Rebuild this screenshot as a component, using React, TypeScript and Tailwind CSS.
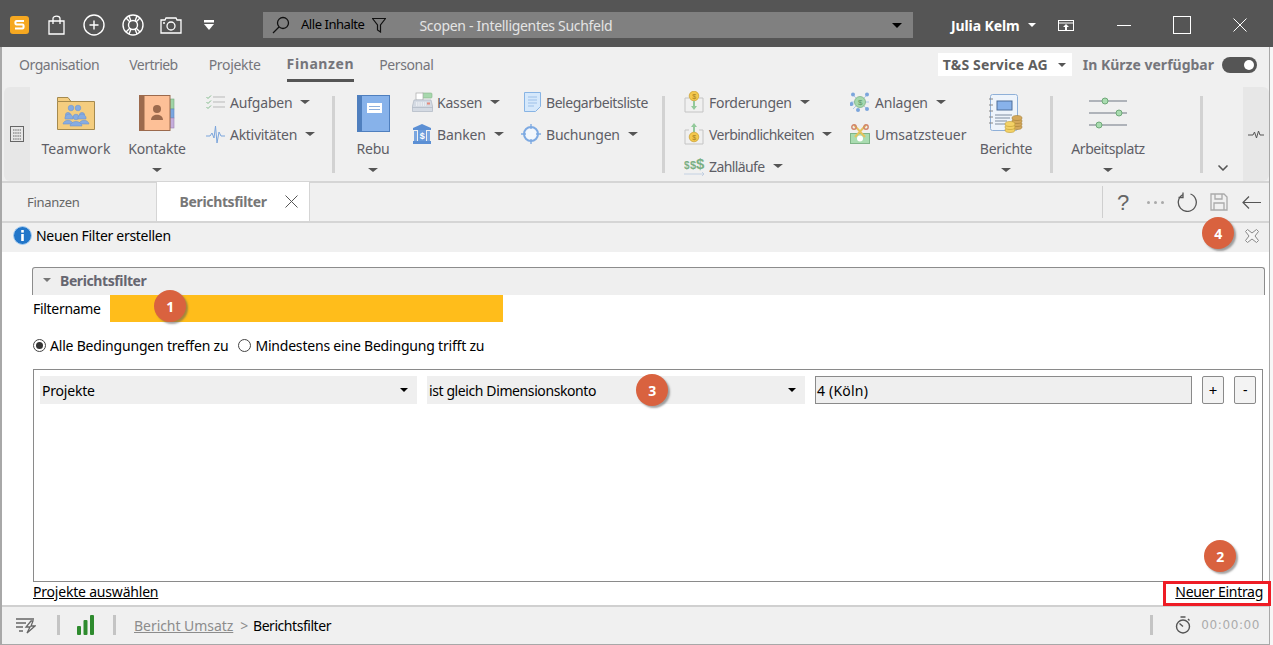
import React from "react";
import { ChevronDown } from "lucide-react";

const Caret = ({ c = "border-t-[#555]", className = "" }: { c?: string; className?: string }) => (
  <span className={`inline-block w-0 h-0 border-l-[4px] border-r-[4px] border-t-[4px] border-l-transparent border-r-transparent ${c} ${className}`} />
);
const WideCaret = ({ className = "" }: { className?: string }) => (
  <span className={`inline-block w-0 h-0 border-l-[5px] border-r-[5px] border-t-[4px] border-l-transparent border-r-transparent border-t-[#555] ${className}`} />
);

const Small = ({ icon, label, caret, iw, tr = "tracking-[-0.2px]" }: { icon: React.ReactNode; label: string; caret?: boolean; iw: string; tr?: string }) => (
  <div className="flex items-center h-[32px] whitespace-nowrap text-[14px] text-[#5e5e66]">
    <span className={`flex items-center justify-start shrink-0 ${iw}`}>{icon}</span>
    <span className={tr}>{label}</span>
    {caret && <WideCaret className="ml-[8px]" />}
  </div>
);

const Large = ({ icon, label, caret, w, tr = "tracking-[-0.2px]" }: { icon: React.ReactNode; label: string; caret?: boolean; w: string; tr?: string }) => (
  <div className={`flex flex-col items-center shrink-0 h-full ${w}`}>
    <div className="h-[52px] flex items-center justify-center shrink-0">{icon}</div>
    <div className={`text-[14px] leading-[19px] text-[#5e5e66] whitespace-nowrap ${tr}`}>{label}</div>
    {caret && <WideCaret className="mt-[10px]" />}
  </div>
);

const Sep = ({ m = "" }: { m?: string }) => <div className={`w-[3px] bg-[#d2d2d2] self-start mt-[9px] h-[77px] shrink-0 ${m}`} />;

const Badge = ({ n, className }: { n: string; className: string }) => (
  <div className={`absolute w-[32px] h-[32px] rounded-full bg-[#d9623f] text-white font-bold text-[14px] flex items-center justify-center shadow-[2px_2px_2px_rgba(90,90,90,0.55)] ${className}`}>{n}</div>
);

const TeamIcon = () => (
  <svg width="38" height="33" viewBox="0 0 38 33">
    <path d="M0.5 4.5V0.5H11L14 4.5H37.5V32.5H0.5Z" fill="#f4cd7f" stroke="#a58a4e" />
    <path d="M0.5 4.5H14" stroke="#a58a4e" />
    <g fill="#86ace2" stroke="#6f96cf" strokeWidth="0.6">
      <circle cx="14" cy="11" r="2.8" /><circle cx="21" cy="11" r="2.8" /><circle cx="11" cy="18" r="2.6" /><circle cx="25" cy="18" r="2.6" /><circle cx="19" cy="20" r="2.8" />
      <path d="M8 20c2-4 6-4 8 0v2H8zM21 20c2-4 6-4 8 0v2h-8z" />
      <path d="M6 27c1-5 9-5 10 0zM22 27c1-5 9-5 10 0z" />
      <path d="M13 29c1-6 11-6 12 0z" />
    </g>
  </svg>
);
const ContactIcon = () => (
  <svg width="36" height="37" viewBox="0 0 36 37">
    <rect x="31" y="4" width="4" height="10" fill="#9fd3a6" stroke="#76a87d" strokeWidth="0.6" />
    <rect x="31" y="14" width="4" height="9" fill="#79a6e0" stroke="#5b88c2" strokeWidth="0.6" />
    <rect x="31" y="23" width="4" height="10" fill="#c5addc" stroke="#9a84b3" strokeWidth="0.6" />
    <rect x="0" y="0" width="5" height="36" fill="#9c6a4d" />
    <rect x="5" y="0.5" width="26" height="35" fill="#fdc097" stroke="#9c6a4d" />
    <circle cx="18" cy="14" r="4" fill="#9c6a4d" />
    <path d="M12 25c0-7 12-7 12 0z" fill="#9c6a4d" />
  </svg>
);
const TaskIcon = () => (
  <svg width="19" height="14" viewBox="0 0 19 14" fill="none">
    <path d="M7 2H19M7 7H19M7 12H19" stroke="#b9b9b9" />
    <path d="M0.5 2L2 3.5L5 0.5M0.5 7L2 8.5L5 5.5M0.5 12L2 13.5L5 10.5" stroke="#83bb8c" />
  </svg>
);
const PulseIcon = () => (
  <svg width="19" height="19" viewBox="0 0 19 19" fill="none">
    <path d="M0 11H4L6 8L8 13L9.5 1L11 18L13 7L15 11H19" stroke="#7ba5dc" />
  </svg>
);
const RebuIcon = () => (
  <svg width="33" height="37" viewBox="0 0 33 37">
    <rect x="0.5" y="0.5" width="32" height="36" fill="#87b2ea" stroke="#4f7fbe" />
    <rect x="0" y="0" width="5" height="37" fill="#4f7fbe" />
    <rect x="10" y="8" width="15" height="10" fill="#fff" />
    <path d="M12 11.5H23M12 14.5H23" stroke="#8eb0de" />
  </svg>
);
const KasseIcon = () => (
  <svg width="21" height="21" viewBox="0 0 21 21">
    <rect x="10" y="1" width="10" height="5" rx="1" fill="#a7d8ad" stroke="#86b58c" strokeWidth="0.6" />
    <rect x="4" y="1" width="7" height="7" fill="#fff" stroke="#a9a9a9" strokeWidth="0.7" />
    <path d="M2 8H19L20.5 14V19.5H0.5V14Z" fill="#d4dae3" stroke="#aeb6c2" strokeWidth="0.7" />
    <path d="M4 11H14M4 13H14" stroke="#fff" strokeDasharray="1.3 1" />
    <rect x="15" y="10.5" width="3" height="2" fill="#e68a7c" />
    <path d="M0.5 15.5H20.5" stroke="#aeb6c2" strokeWidth="0.7" />
  </svg>
);
const BankIcon = () => (
  <svg className="ml-[1px]" width="18" height="20" viewBox="0 0 18 20">
    <path d="M9 0L18 4V6H0V4Z" fill="#5b8fd4" />
    <rect x="1" y="7" width="3" height="10" fill="#7aa6e0" /><rect x="14" y="7" width="3" height="10" fill="#7aa6e0" />
    <rect x="5" y="6" width="8" height="11" fill="#6a9bdb" />
    <text x="9" y="15.3" textAnchor="middle" fontSize="9" fontWeight="700" fill="#fff" fontFamily="Liberation Sans">$</text>
    <rect x="0" y="17" width="18" height="3" fill="#5b8fd4" />
  </svg>
);
const DocIcon = () => (
  <svg className="ml-[1px]" width="17" height="20" viewBox="0 0 17 20" fill="none">
    <path d="M0.5 0.5H16.5V14.5L11.5 19.5H0.5Z" fill="#d5e8fb" stroke="#88b4e4" />
    <path d="M4 5H13M4 8H13M4 11H13M4 14H10" stroke="#9dc0e8" />
  </svg>
);
const BuchIcon = () => (
  <svg className="-ml-[2px]" width="20" height="20" viewBox="0 0 20 20" fill="none">
    <circle cx="10" cy="10" r="7" stroke="#7eaae2" strokeWidth="2" fill="#f3f7fc" />
    <path d="M10 0V5M10 15V20M0 10H5M15 10H20" stroke="#7eaae2" strokeWidth="1.4" />
  </svg>
);
const CoinArrow = ({ up }: { up?: boolean }) => (
  <svg width="20" height="22" viewBox="0 0 20 22" fill="none">
    <path d="M1 7H5M15 7H19M1 7V21H19V7" stroke="#c4c4c4" />
    {up ? (
      <>
        <path d="M10 0L13 4H11V9H9V4H7Z" fill="#93c99b" />
        <circle cx="10" cy="14" r="4.8" fill="#f3c84d" stroke="#c79c2f" strokeWidth="0.7" />
        <text x="10" y="16.5" textAnchor="middle" fontSize="7" fill="#a87f1f" fontFamily="Liberation Sans">$</text>
      </>
    ) : (
      <>
        <circle cx="10" cy="5" r="4.8" fill="#f3c84d" stroke="#c79c2f" strokeWidth="0.7" />
        <text x="10" y="7.5" textAnchor="middle" fontSize="7" fill="#a87f1f" fontFamily="Liberation Sans">$</text>
        <path d="M9 10H11V15H13L10 19L7 15H9Z" fill="#93c99b" />
      </>
    )}
  </svg>
);
const ZahlIcon = () => (
  <svg width="21" height="20" viewBox="0 0 21 20" fill="none">
    <text x="0" y="13" fontSize="10" fontWeight="700" fill="#7aaf83" fontFamily="Liberation Sans">$</text>
    <text x="6" y="13" fontSize="11" fontWeight="700" fill="#7aaf83" fontFamily="Liberation Sans">$</text>
    <text x="12" y="13" fontSize="15" fontWeight="700" fill="#7aaf83" fontFamily="Liberation Sans">$</text>
    <path d="M0 18H20M18 16L20 18L18 20" stroke="#b9c9de" strokeWidth="0.8" />
  </svg>
);
const AnlagenIcon = () => (
  <svg width="20" height="20" viewBox="0 0 20 20" fill="none">
    <path d="M3 3L17 17M17 3L3 17M1 10H19" stroke="#9dbce5" strokeWidth="0.8" />
    <circle cx="10" cy="10" r="5.5" fill="#a6d8ad" stroke="#75ab7d" strokeWidth="0.7" />
    <text x="10" y="13" textAnchor="middle" fontSize="8" fill="#5f9868" fontFamily="Liberation Sans">$</text>
    <circle cx="3" cy="2.5" r="2" fill="#7ba5dc" /><circle cx="17" cy="2.5" r="2" fill="#7ba5dc" /><circle cx="1.5" cy="12" r="2" fill="#7ba5dc" /><circle cx="8" cy="18" r="2" fill="#7ba5dc" /><circle cx="17" cy="17" r="2" fill="#7ba5dc" />
  </svg>
);
const UStIcon = () => (
  <svg width="20" height="20" viewBox="0 0 20 20" fill="none">
    <rect x="0.5" y="9.5" width="19" height="10" fill="#a9dcb0" stroke="#7fb487" />
    <circle cx="10" cy="14.5" r="3" fill="#fff" />
    <path d="M4 1L15 13M16 1L5 13" stroke="#e6c35c" strokeWidth="2" />
    <circle cx="4" cy="3" r="2.2" stroke="#d0846a" strokeWidth="1.4" /><circle cx="16" cy="3" r="2.2" stroke="#d0846a" strokeWidth="1.4" />
  </svg>
);
const BerichteIcon = () => (
  <svg width="34" height="39" viewBox="0 0 34 39" fill="none">
    <rect x="1.5" y="0.5" width="27" height="36" rx="2" fill="#eef4fb" stroke="#8fb0d8" />
    <path d="M0 5H4M0 11H4M0 17H4M0 23H4M0 29H4" stroke="#888" />
    <rect x="8" y="7" width="15" height="9" fill="#88b2ea" stroke="#4f6f9a" />
    <path d="M6 21H23M6 24H21M6 27H18M6 30H16" stroke="#7f8da0" />
    <g fill="#d4a85a" stroke="#a57f38" strokeWidth="0.6">
      <ellipse cx="28" cy="33" rx="5" ry="2.5" /><ellipse cx="28" cy="30" rx="5" ry="2.5" /><ellipse cx="28" cy="27" rx="5" ry="2.5" /><ellipse cx="28" cy="24" rx="5" ry="2.5" />
    </g>
    <g fill="#f4d266" stroke="#bd9a33" strokeWidth="0.6">
      <ellipse cx="21" cy="36" rx="5" ry="2.5" /><ellipse cx="21" cy="33" rx="5" ry="2.5" /><ellipse cx="21" cy="30" rx="5" ry="2.5" />
    </g>
  </svg>
);
const ArbeitIcon = () => (
  <svg width="38" height="32" viewBox="0 0 38 32" fill="none">
    <path d="M0 4H38M0 16H38M0 28H38" stroke="#6f7683" />
    <circle cx="16" cy="4" r="3" fill="#a9dcb0" stroke="#6fa878" />
    <circle cx="30" cy="16" r="3" fill="#a9dcb0" stroke="#6fa878" />
    <circle cx="10" cy="28" r="3" fill="#a9dcb0" stroke="#6fa878" />
  </svg>
);

const Select = ({ label, w, ml, tr }: { label: string; w: string; ml: string; tr: string }) => (
  <div className={`h-[28px] bg-[#efefef] flex items-center justify-between pl-[2px] pr-[9px] text-[14px] text-black shrink-0 ${w} ${ml}`}>
    <span className={tr}>{label}</span>
    <Caret c="border-t-black" className="border-l-[4.5px] border-r-[4.5px]" />
  </div>
);

export default function App() {
  return (
    <div className="relative w-[1273px] h-[645px] overflow-hidden bg-[#f7f7f7] text-black font-['Noto_Sans','Open_Sans',sans-serif] tracking-[-0.3px]">
      {/* title bar */}
      <div className="h-[47px] pt-[3px] bg-[#555555] flex items-center text-white">
        <svg className="ml-[10px]" width="19" height="18" viewBox="0 0 19 18">
          <rect width="19" height="18" rx="3" fill="#f6a821" />
          <path d="M14 5H6.5C5 5 5 8.5 6.5 8.5H12.5C14 8.5 14 12.5 12.5 12.5H5" fill="none" stroke="#fff" strokeWidth="2" />
        </svg>
        <svg className="ml-[19px]" width="17" height="20" viewBox="0 0 17 20" fill="none" stroke="#fff" strokeWidth="1.3"><path d="M1 6H16V19H1Z" /><path d="M5 9V3.5C5 0.3 12 0.3 12 3.5V9" /></svg>
        <svg className="ml-[18px]" width="22" height="22" viewBox="0 0 22 22" fill="none" stroke="#fff" strokeWidth="1.4"><circle cx="11" cy="11" r="10" /><path d="M11 6.5V15.5M6.5 11H15.5" /></svg>
        <svg className="ml-[17px]" width="22" height="22" viewBox="0 0 22 22" fill="none" stroke="#fff" strokeWidth="1.4"><circle cx="11" cy="11" r="10" /><circle cx="11" cy="11" r="4.5" /><path d="M4 4L8 8M18 4L14 8M4 18L8 14M18 18L14 14M7 2L9 7M15 2L13 7M7 20L9 15M15 20L13 15" /></svg>
        <svg className="ml-[16px]" width="22" height="17" viewBox="0 0 22 17" fill="none" stroke="#fff" strokeWidth="1.3"><path d="M1 3H5L6 1H16L17 3H21V16H1Z" /><circle cx="11" cy="9" r="4" /><path d="M3 6H5" /></svg>
        <svg className="ml-[21px]" width="12" height="11" viewBox="0 0 12 11"><rect x="1" y="0" width="10" height="2.5" fill="#fff" /><path d="M1 4H11L6 10Z" fill="#fff" /></svg>
        <div className="ml-[48px] w-[650px] h-[26px] bg-[#808080] flex items-center text-[13px]">
          <svg className="ml-[9px] shrink-0" width="18" height="18" viewBox="0 0 18 18" fill="none" stroke="#111" strokeWidth="1.3"><circle cx="11" cy="7" r="5.5" /><path d="M7 11L1 17" /></svg>
          <span className="ml-[11px] text-black tracking-[-0.45px]">Alle Inhalte</span>
          <svg className="ml-[8px] shrink-0" width="14" height="15" viewBox="0 0 14 15" fill="none" stroke="#111" strokeWidth="1.2"><path d="M0.5 0.5H13.5L8.5 7V14L5.5 12V7Z" /></svg>
          <span className="ml-[33px] text-[14px] text-[#e4e4e4]">Scopen - Intelligentes Suchfeld</span>
          <Caret c="border-t-black" className="ml-auto mr-[11px] border-l-[5px] border-r-[5px] border-t-[5px]" />
        </div>
        <span className="ml-[38px] font-bold text-[14px] tracking-[-0.1px]">Julia Kelm</span>
        <Caret c="border-t-white" className="ml-[8px]" />
        <svg className="ml-[22px]" width="16" height="11" viewBox="0 0 16 11" fill="none" stroke="#fff"><rect x="0.5" y="0.5" width="15" height="10" /><path d="M0.5 3H15.5" /><path d="M5 7L8 4L11 7H9V10H7V7Z" fill="#fff" stroke="none" /></svg>
        <div className="ml-[43px] w-[14px] h-[1px] bg-white" />
        <div className="ml-[42px] w-[18px] h-[18px] border border-white" />
        <svg className="ml-[42px]" width="14" height="14" viewBox="0 0 14 14" stroke="#fff"><path d="M0.5 0.5L13.5 13.5M13.5 0.5L0.5 13.5" /></svg>
      </div>

      <div className="w-[1270px] bg-[#f0f0f0] border-l-2 border-r border-[#a8a8a8] h-[597px] flex flex-col">
        {/* nav */}
        <div className="h-[40px] flex items-start shrink-0 text-[14px] text-[#75757b]">
          <span className="ml-[17px] mt-[7px] tracking-[-0.45px]">Organisation</span>
          <span className="ml-[30px] mt-[7px] tracking-[-0.55px]">Vertrieb</span>
          <span className="ml-[31px] mt-[7px]">Projekte</span>
          <span className="ml-[26px] mt-[7px] font-bold tracking-[0.6px] border-b-[3px] border-[#555] pb-[4px] h-[28px] leading-[19px]">Finanzen</span>
          <span className="ml-[25px] mt-[7px] tracking-[-0.4px]">Personal</span>
          <div className="ml-auto mr-[12px] flex items-center mt-[6px] font-bold">
            <div className="w-[134px] h-[23px] bg-white flex items-center pl-[5px] text-[#5f5f5f] tracking-[0.15px]">
              <span>T&amp;S Service AG</span>
              <Caret c="border-t-[#555]" className="ml-auto mr-[6px]" />
            </div>
            <span className="ml-[11px] tracking-[0px]">In Kürze verfügbar</span>
            <div className="ml-[8px] w-[35px] h-[16px] rounded-full bg-[#555] flex items-center justify-end pr-[3px]">
              <div className="w-[10px] h-[10px] rounded-full bg-white" />
            </div>
          </div>
        </div>

        {/* ribbon */}
        <div className="h-[96px] flex shrink-0 border-b-2 border-[#d5d5d5]">
          <div className="ml-[2px] w-[26px] h-[94px] rounded-l-[6px] bg-[#e7e7e7] flex items-center justify-center shrink-0">
            <svg width="14" height="16" viewBox="0 0 14 16" fill="none" stroke="#666"><rect x="0.5" y="0.5" width="13" height="15" /><path d="M3 4H11M3 7H11M3 10H11M3 13H11" strokeDasharray="1.5 .7" /></svg>
          </div>
          <Large w="w-[92px]" icon={<TeamIcon />} label="Teamwork" tr="tracking-[0.1px]" />
          <Large w="w-[70px]" icon={<ContactIcon />} label="Kontakte" caret />
          <div className="w-[140px] shrink-0 pl-[14px] -mt-[1px]">
            <Small iw="w-[24px]" icon={<TaskIcon />} label="Aufgaben" caret />
            <Small iw="w-[24px]" icon={<PulseIcon />} label="Aktivitäten" caret tr="tracking-[-0.3px]" />
          </div>
          <Sep />
          <Large w="w-[76px]" icon={<RebuIcon />} label="Rebu" caret />
          <div className="w-[112px] shrink-0 pl-[1px] -mt-[1px]">
            <Small iw="w-[25px]" icon={<KasseIcon />} label="Kassen" caret />
            <Small iw="w-[25px]" icon={<BankIcon />} label="Banken" caret tr="tracking-[-0.15px]" />
          </div>
          <div className="w-[139px] shrink-0 -mt-[1px]">
            <Small iw="w-[23px]" icon={<DocIcon />} label="Belegarbeitsliste" tr="tracking-[-0.45px]" />
            <Small iw="w-[23px]" icon={<BuchIcon />} label="Buchungen" caret />
          </div>
          <Sep />
          <div className="w-[185px] shrink-0 pl-[19px] -mt-[1px]">
            <Small iw="w-[25px]" icon={<CoinArrow />} label="Forderungen" caret tr="tracking-[-0.3px]" />
            <Small iw="w-[25px]" icon={<CoinArrow up />} label="Verbindlichkeiten" caret tr="tracking-[-0.55px]" />
            <Small iw="w-[25px]" icon={<ZahlIcon />} label="Zahlläufe" caret tr="tracking-[-0.6px]" />
          </div>
          <div className="w-[115px] shrink-0 -mt-[1px]">
            <Small iw="w-[25px]" icon={<AnlagenIcon />} label="Anlagen" caret />
            <Small iw="w-[25px]" icon={<UStIcon />} label="Umsatzsteuer" tr="tracking-[0px]" />
          </div>
          <Large w="w-[82px]" icon={<BerichteIcon />} label="Berichte" caret tr="tracking-[-0.3px]" />
          <Sep m="ml-[3px]" />
          <Large w="w-[110px]" icon={<ArbeitIcon />} label="Arbeitsplatz" caret tr="tracking-[-0.4px]" />
          <Sep m="ml-[37px]" />
          <div className="w-[40px] shrink-0 flex justify-center items-end pb-[5px]">
            <ChevronDown size={16} strokeWidth={2.5} color="#555" />
          </div>
          <div className="w-[26px] h-[94px] rounded-r-[6px] bg-[#e7e7e7] flex items-center justify-center shrink-0">
            <svg width="16" height="9" viewBox="0 0 16 9" fill="none" stroke="#555"><path d="M0 5H5L6.5 2L8.5 8L10.5 1L12 5H16" /></svg>
          </div>
        </div>

        {/* tabs */}
        <div className="h-[40px] flex shrink-0 border-b-2 border-[#d5d5d5] pr-[6px]">
          <span className="ml-[25px] mt-[10px] text-[13px] text-[#666]">Finanzen</span>
          <div className="ml-[76px] w-[154px] h-[39px] -mt-[1px] bg-white border-x border-[#d5d5d5] flex items-center pl-[23px] text-[14px] font-bold text-[#777] tracking-[-0.35px]">
            <span>Berichtsfilter</span>
            <svg className="ml-[18px]" width="13" height="13" viewBox="0 0 13 13" stroke="#555"><path d="M0.5 0.5L12.5 12.5M12.5 0.5L0.5 12.5" /></svg>
          </div>
          <div className="ml-auto flex items-center h-[38px]">
            <div className="w-px h-[32px] bg-[#cfcfcf]" />
            <span className="ml-[14px] text-[22px] text-[#666] font-['Liberation_Sans',sans-serif]">?</span>
            <svg className="ml-[18px]" width="17" height="3" viewBox="0 0 17 3" fill="#aaa"><circle cx="1.5" cy="1.5" r="1.5" /><circle cx="8.5" cy="1.5" r="1.5" /><circle cx="15.5" cy="1.5" r="1.5" /></svg>
            <svg className="ml-[13px]" width="20" height="20" viewBox="0 0 20 20" fill="none" stroke="#555" strokeWidth="1.3"><path d="M6 2.5A9 9 0 1 0 13.5 2M6 0.5V5.5H1.5" /></svg>
            <svg className="ml-[13px]" width="18" height="18" viewBox="0 0 18 18" fill="none" stroke="#aaa" strokeWidth="1.3"><path d="M1 1H14L17 4V17H1Z" /><path d="M5 1V6H12V1M4 17V10H14V17" /></svg>
            <svg className="ml-[14px] mr-[2px]" width="19" height="13" viewBox="0 0 19 13" fill="none" stroke="#555" strokeWidth="1.2"><path d="M19 6.5H1M7 0.5L1 6.5L7 12.5" /></svg>
          </div>
        </div>

        {/* info bar */}
        <div className="h-[29px] flex items-center shrink-0 pr-[10px] pb-[4px]">
          <svg className="ml-[11px]" width="19" height="19" viewBox="0 0 19 19"><circle cx="9.5" cy="9.5" r="9" fill="#2276c9" stroke="#a8cdf0" /><rect x="8.2" y="8" width="2.6" height="7" fill="#fff" /><rect x="8.2" y="4" width="2.6" height="2.6" fill="#fff" /></svg>
          <span className="ml-[4px] text-[14px]">Neuen Filter erstellen</span>
          <svg className="ml-auto" width="14" height="14" viewBox="0 0 14 14" fill="#f5f5f5" stroke="#888"><path d="M2.5 0.5L7 4L11.5 0.5L13.5 2.5L10 7L13.5 11.5L11.5 13.5L7 10L2.5 13.5L0.5 11.5L4 7L0.5 2.5Z" /></svg>
        </div>

        {/* content */}
        <div className="h-[353px] bg-white shrink-0 pl-[30px] pr-[4px] pt-[15px] flex flex-col text-[14px]">
          <div className="h-[28px] shrink-0 bg-[#efefef] border-t border-x border-[#8c8c8c] rounded-t-[3px] flex items-center pl-[10px] pb-[3px]">
            <Caret c="border-t-[#777]" />
            <span className="ml-[9px] font-bold text-[#666670] tracking-[-0.4px]">Berichtsfilter</span>
          </div>
          <div className="h-[27px] shrink-0 flex items-center pl-[1px]">
            <span className="w-[77px] shrink-0">Filtername</span>
            <div className="w-[393px] h-[27px] bg-[#ffbd1b]" />
          </div>
          <div className="mt-[13px] h-[20px] shrink-0 flex items-center pl-[1px]">
            <span className="w-[13px] h-[13px] rounded-full border border-[#444] flex items-center justify-center"><span className="w-[7px] h-[7px] rounded-full bg-[#333]" /></span>
            <span className="ml-[4px] tracking-[-0.2px]">Alle Bedingungen treffen zu</span>
            <span className="ml-[10px] w-[13px] h-[13px] rounded-full border border-[#444]" />
            <span className="ml-[4px] tracking-[-0.2px]">Mindestens eine Bedingung trifft zu</span>
          </div>
          <div className="mt-[14px] ml-[1px] mr-[2px] h-[213px] shrink-0 border border-[#8a8a8a] px-[6px] pt-[6px]">
            <div className="flex items-start">
              <Select label="Projekte" w="w-[377px]" ml="" tr="tracking-[-0.2px]" />
              <Select label="ist gleich Dimensionskonto" w="w-[378px]" ml="ml-[10px]" tr="tracking-[-0.4px]" />
              <div className="ml-[10px] w-[377px] h-[28px] border border-[#8a8a8a] bg-[#efefef] flex items-center pl-[1px] shrink-0 tracking-[0.2px]">4 (Köln)</div>
              <button className="ml-[10px] w-[22px] h-[28px] border border-[#8a8a8a] rounded-[2px] bg-[#f3f3f3] text-[15px] leading-none shrink-0">+</button>
              <button className="ml-[10px] w-[22px] h-[28px] border border-[#8a8a8a] rounded-[2px] bg-[#f3f3f3] leading-none shrink-0">-</button>
            </div>
          </div>
          <div className="h-[23px] ml-[1px] mr-[2px] shrink-0 flex items-start justify-between leading-[20px]">
            <a className="underline tracking-[-0.2px]">Projekte auswählen</a>
            <a className="underline">Neuer Eintrag</a>
          </div>
        </div>

        {/* status bar */}
        <div className="h-[38px] shrink-0 border-t-2 border-[#d0d0d0] flex items-center text-[14px] pr-[9px]">
          <svg className="ml-[14px]" width="20" height="17" viewBox="0 0 20 17" fill="none" stroke="#666" strokeWidth="1.3"><path d="M0 2H18M0 6H10M0 10H7M3 14H7" /><path d="M15 4L10 10H14L11 16L19 9H15L17 4Z" /></svg>
          <div className="ml-[21px] w-[3px] h-[20px] bg-[#c4c4c4]" />
          <svg className="ml-[17px]" width="17" height="20" viewBox="0 0 17 20" fill="#2e8b2e"><rect x="0" y="11" width="4" height="9" rx="1" /><rect x="6.5" y="5" width="4" height="15" rx="1" /><rect x="13" y="0" width="4" height="20" rx="1" /></svg>
          <div className="ml-[19px] w-[3px] h-[20px] bg-[#c4c4c4]" />
          <span className="ml-[18px] text-[#8c8c8c] underline tracking-[-0.05px]">Bericht Umsatz</span>
          <span className="ml-[7px] text-[#8c8c8c]">&gt;</span>
          <span className="ml-[5px] tracking-[-0.45px]">Berichtsfilter</span>
          <div className="ml-auto w-[3px] h-[20px] bg-[#c4c4c4]" />
          <svg className="ml-[22px]" width="16" height="18" viewBox="0 0 16 18" fill="none" stroke="#555" strokeWidth="1.4"><circle cx="8" cy="10.5" r="6.5" /><path d="M5.5 1H10.5M13 3L14.5 4.5M8 10.5L4.5 7.5" /></svg>
          <span className="ml-[10px] text-[12px] tracking-[0.6px] text-[#ababab] font-['DejaVu_Sans',sans-serif]">00:00:00</span>
        </div>
      </div>
      <div className="w-[1270px] h-px bg-[#a8a8a8]" />

      {/* annotations */}
      <Badge n="1" className="left-[154px] top-[290px]" />
      <Badge n="3" className="left-[636px] top-[374px]" />
      <Badge n="4" className="left-[1202px] top-[217px]" />
      <Badge n="2" className="left-[1204px] top-[540px]" />
      <div className="absolute left-[1163px] top-[581px] w-[108px] h-[25px] border-[3px] border-[#ee1c25]" />
    </div>
  );
}
